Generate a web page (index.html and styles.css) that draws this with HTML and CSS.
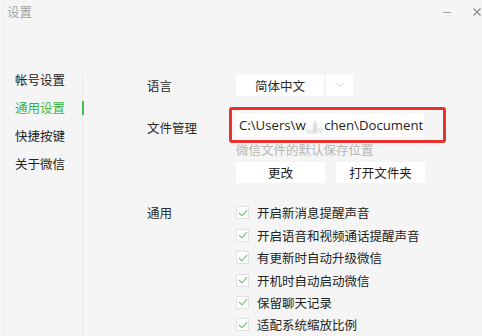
FILE: index.html
```html
<!DOCTYPE html>
<html lang="zh">
<head>
<meta charset="utf-8">
<title>设置</title>
<link rel="stylesheet" href="styles.css">
</head>
<body>
<div class="window">
  <div class="titlebar">
    <span class="title">设置</span>
    <div class="controls">
      <span class="ctl min"></span>
      <svg class="ctl close" width="8" height="8" viewBox="0 0 8 8"><path d="M0.5 0.5L7.5 7.5M7.5 0.5L0.5 7.5" stroke="#8a8a8a" stroke-width="1.2"/></svg>
    </div>
  </div>
  <div class="main">
    <nav class="sidebar">
      <div class="nav-item">帐号设置</div>
      <div class="nav-item active">通用设置</div>
      <div class="nav-item">快捷按键</div>
      <div class="nav-item">关于微信</div>
    </nav>
    <section class="content">
      <div class="row row-lang">
        <div class="label">语言</div>
        <div class="field">
          <div class="select">
            <span class="select-value">简体中文</span>
            <span class="select-arrow"><svg width="9" height="6" viewBox="0 0 9 6"><path d="M0.5 0.8L4.5 4.8L8.5 0.8" fill="none" stroke="#d4d4d4" stroke-width="1"/></svg></span>
          </div>
        </div>
      </div>
      <div class="row row-file">
        <div class="label">文件管理</div>
        <div class="field">
          <div class="path-wrap">
            <div class="path">C:\Users\w<span class="blur">_j,</span>chen\Document</div>
            <span class="highlight"></span>
          </div>
          <div class="hint">微信文件的默认保存位置</div>
          <div class="buttons">
            <button class="btn">更改</button>
            <button class="btn">打开文件夹</button>
          </div>
        </div>
      </div>
      <div class="row row-general">
        <div class="label">通用</div>
        <div class="field checks">
          <div class="check"><span class="box"><svg width="10" height="8" viewBox="0 0 10 8"><path d="M1 4L4 6.8L9 1.2" fill="none" stroke="#6cc06c" stroke-width="1.1"/></svg></span>开启新消息提醒声音</div>
          <div class="check"><span class="box"><svg width="10" height="8" viewBox="0 0 10 8"><path d="M1 4L4 6.8L9 1.2" fill="none" stroke="#6cc06c" stroke-width="1.1"/></svg></span>开启语音和视频通话提醒声音</div>
          <div class="check"><span class="box"><svg width="10" height="8" viewBox="0 0 10 8"><path d="M1 4L4 6.8L9 1.2" fill="none" stroke="#6cc06c" stroke-width="1.1"/></svg></span>有更新时自动升级微信</div>
          <div class="check"><span class="box"><svg width="10" height="8" viewBox="0 0 10 8"><path d="M1 4L4 6.8L9 1.2" fill="none" stroke="#6cc06c" stroke-width="1.1"/></svg></span>开机时自动启动微信</div>
          <div class="check"><span class="box"><svg width="10" height="8" viewBox="0 0 10 8"><path d="M1 4L4 6.8L9 1.2" fill="none" stroke="#6cc06c" stroke-width="1.1"/></svg></span>保留聊天记录</div>
          <div class="check"><span class="box"><svg width="10" height="8" viewBox="0 0 10 8"><path d="M1 4L4 6.8L9 1.2" fill="none" stroke="#6cc06c" stroke-width="1.1"/></svg></span>适配系统缩放比例</div>
        </div>
      </div>
    </section>
  </div>
</div>
</body>
</html>
```
FILE: styles.css
```css
* { box-sizing: border-box; }
html, body { margin: 0; padding: 0; }
body {
  width: 482px;
  height: 336px;
  overflow: hidden;
  background: #f5f5f5;
  font-family: "Noto Sans CJK SC", "Noto Sans", sans-serif;
  font-size: 12.5px;
  color: #2b2b2b;
}
.window {
  height: 336px;
  display: flex;
  flex-direction: column;
  border-left: 1px solid #eeeeee;
  margin-left: 3px;
}
.titlebar {
  height: 66px;
  display: flex;
  justify-content: space-between;
  align-items: flex-start;
  padding: 3px 0 0 3px;
}
.title {
  color: #a3a3a3;
  font-size: 12.5px;
  line-height: 18px;
}
.controls {
  display: flex;
  align-items: center;
  gap: 22px;
  padding-top: 5px;
  padding-right: 1px;
}
.ctl.min {
  display: block;
  width: 8px;
  height: 1px;
  background: #9a9a9a;
}
.main {
  flex: 1;
  display: flex;
}
.sidebar {
  width: 79px;
  border-right: 1px solid #e8e8e8;
  margin-top: 9px;
  position: relative;
}
.nav-item {
  position: relative;
  height: 28px;
  line-height: 28px;
  padding-left: 11px;
  color: #222;
}
.nav-item:first-child { margin-top: -9px; }
.nav-item.active { color: #35b548; }
.nav-item.active::after {
  content: "";
  position: absolute;
  right: -2px;
  top: 7px;
  width: 2px;
  height: 14px;
  background: #3ec24c;
}
.content {
  flex: 1;
  padding-left: 64px;
  padding-top: 9px;
  display: flex;
  flex-direction: column;
}
.row { display: flex; }
.label {
  width: 89px;
  flex: none;
  color: #2b2b2b;
}
.row-lang .label { line-height: 21px; }
.select {
  display: flex;
  height: 21px;
}
.select-value {
  width: 88px;
  background: #fff;
  text-align: center;
  line-height: 21px;
}
.select-arrow {
  width: 27px;
  margin-left: 2px;
  background: #fff;
  display: flex;
  align-items: center;
  justify-content: center;
}
.row-file { margin-top: 17px; }
.row-file .label { line-height: 24px; padding-top: 3px; }
.path-wrap {
  position: relative;
  width: 188px;
}
.path {
  height: 24px;
  background: #fff;
  padding-left: 3px;
  font-family: "Open Sans", "Noto Sans", sans-serif;
  font-size: 13.2px;
  line-height: 24px;
  color: #1e1e1e;
  white-space: nowrap;
  overflow: hidden;
}
.blur {
  filter: blur(1.6px);
  color: #777;
  letter-spacing: 2px;
}
.highlight {
  position: absolute;
  left: -7px;
  top: -6px;
  right: -22px;
  bottom: -6px;
  border: 3px solid #e8322d;
  border-radius: 3px;
}
.hint {
  color: #b5b5b5;
  line-height: 18px;
  margin-top: 4px;
}
.buttons {
  display: flex;
  gap: 11px;
  margin-top: 3px;
}
.btn {
  width: 89px;
  height: 21px;
  background: #fff;
  border: none;
  padding: 0;
  font: inherit;
  color: #222;
  line-height: 21px;
}
.row-general { margin-top: 19px; }
.row-general .label { line-height: 22.4px; }
.checks {
  display: flex;
  flex-direction: column;
}
.check {
  height: 22.4px;
  display: flex;
  align-items: center;
  color: #222;
}
.box {
  width: 13px;
  height: 13px;
  background: #fff;
  border: 1px solid #e2e2e2;
  margin-right: 8px;
  display: flex;
  align-items: center;
  justify-content: center;
}
```
